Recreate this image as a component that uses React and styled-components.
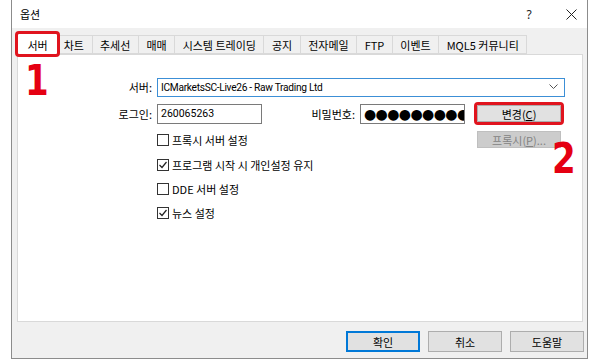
import React from 'react';
import styled, { createGlobalStyle } from 'styled-components';

const Global = createGlobalStyle`
  html, body { margin: 0; padding: 0; background: #ffffff; }
  body {
    font-family: "Noto Sans CJK KR", "Noto Sans", sans-serif;
    font-size: 11px;
    color: #000;
  }
  * { box-sizing: border-box; }
`;

const Window = styled.div`
  margin-left: 11px;
  width: 577px;
  height: 359px;
  border-left: 1px solid #8c8c8c;
  border-right: 1px solid #8c8c8c;
  border-bottom: 1px solid #8c8c8c;
  background: #f0f0f0;
  display: flex;
  flex-direction: column;
`;

const TitleBar = styled.div`
  height: 28px;
  background: #ffffff;
  display: flex;
  align-items: center;
  padding: 0 6px 0 8px;
`;

const Title = styled.div`
  flex: 1;
  font-size: 11px;
  color: #000;
`;

const TitleButton = styled.div`
  width: ${(p) => p.$w}px;
  margin-left: ${(p) => p.$gap || 0}px;
  display: flex;
  justify-content: center;
  align-items: center;
  font-family: "Noto Sans", sans-serif;
  font-size: 12px;
  color: #222;
`;

const Body = styled.div`
  flex: 1;
  display: flex;
  flex-direction: column;
  padding: 7px 4px 0 5px;
`;

const TabStrip = styled.div`
  display: flex;
  align-items: flex-end;
  height: 19px;
  position: relative;
  z-index: 2;
`;

const Tab = styled.div`
  height: ${(p) => (p.$active ? 22 : 19)}px;
  margin: ${(p) => (p.$active ? '0 -2px -1px 0' : '0 0 0 -1px')};
  padding: ${(p) => (p.$active ? '0 9.5px' : '0 7.5px')};
  display: flex;
  align-items: center;
  background: ${(p) => (p.$active ? '#ffffff' : '#f0f0f0')};
  border: 1px solid #d9d9d9;
  border-bottom: ${(p) => (p.$active ? 'none' : '1px solid #d9d9d9')};
  white-space: nowrap;
  outline: ${(p) => (p.$highlight ? '3px solid #e0141e' : 'none')};
  outline-offset: -1px;
  border-radius: ${(p) => (p.$highlight ? '2px' : '0')};
  position: relative;
  z-index: ${(p) => (p.$active ? 3 : 1)};
  &:first-child { margin-left: 0; }
`;

const Panel = styled.div`
  position: relative;
  height: 268px;
  background: #ffffff;
  border: 1px solid #d9d9d9;
`;

const Form = styled.div`
  display: grid;
  grid-template-columns: 134px 105px 88px 105px 98px;
  grid-template-rows: 26px 27px 25px 25px 24px 24px;
  column-gap: 5px;
  align-items: center;
  padding-top: 19px;
`;

const Label = styled.div`
  text-align: right;
  white-space: nowrap;
  grid-column: ${(p) => p.$col};
`;

const Combo = styled.div`
  grid-column: 2 / 6;
  margin-right: 3px;
  height: 19px;
  border: 1px solid #3c8fd6;
  display: flex;
  align-items: center;
  padding: 0 6px 0 3px;
  font-family: "Roboto", "Noto Sans CJK KR", sans-serif;
  font-size: 10.2px;
  letter-spacing: -0.3px;
`;

const ComboText = styled.span`
  flex: 1;
  white-space: nowrap;
`;

const TextBox = styled.div`
  grid-column: ${(p) => p.$col};
  height: 20px;
  border: 1px solid #7a7a7a;
  display: flex;
  align-items: center;
  padding: 0 3px;
  font-family: "Roboto", "Noto Sans CJK KR", sans-serif;
  font-size: 10.5px;
  overflow: hidden;
  white-space: nowrap;
`;

const Dots = styled.span`
  font-family: "DejaVu Sans", sans-serif;
  font-size: 14px;
  letter-spacing: -0.6px;
  line-height: 1;
`;

const PushButton = styled.div`
  grid-column: 5;
  margin-left: 7px;
  width: 84px;
  height: 17px;
  display: flex;
  align-items: center;
  justify-content: center;
  background: ${(p) => (p.$disabled ? '#cccccc' : '#e1e1e1')};
  border: 1px solid ${(p) => (p.$disabled ? '#bfbfbf' : '#adadad')};
  color: ${(p) => (p.$disabled ? '#838383' : '#000')};
  outline: ${(p) => (p.$highlight ? '3px solid #e0141e' : 'none')};
  border-radius: ${(p) => (p.$highlight ? '1px' : '0')};
  white-space: nowrap;
`;

const U = styled.span`
  text-decoration: underline;
`;

const CheckRow = styled.div`
  grid-column: 2 / 5;
  display: flex;
  align-items: center;
  gap: 3px;
  white-space: nowrap;
`;

const Box = styled.div`
  width: 12px;
  height: 12px;
  border: 1px solid #333333;
  background: #fff;
  display: flex;
  align-items: center;
  justify-content: center;
`;

const Footer = styled.div`
  flex: 1;
  display: flex;
  justify-content: flex-end;
  align-items: flex-start;
  gap: 8px;
  padding: 9px 0 0 0;
  margin-right: -1px;
`;

const DialogButton = styled.div`
  width: 74px;
  height: 21px;
  display: flex;
  align-items: center;
  justify-content: center;
  background: #e1e1e1;
  border: 1px solid ${(p) => (p.$default ? '#0078d7' : '#adadad')};
  box-shadow: ${(p) => (p.$default ? 'inset 0 0 0 1px #0078d7' : 'none')};
`;

const Marker = styled.div`
  position: absolute;
  left: ${(p) => p.$x}px;
  top: ${(p) => p.$y}px;
  font-family: "DejaVu Sans Condensed", "DejaVu Sans", sans-serif;
  font-weight: 700;
  font-size: 42px;
  line-height: 30px;
  height: 30px;
  color: #e50012;
  transform: scaleX(0.9);
  transform-origin: left top;
`;

function Check({ checked }) {
  return (
    <Box>
      {checked && (
        <svg width="10" height="10" viewBox="0 0 10 10">
          <polyline points="1.5,5 4,7.5 8.5,2" fill="none" stroke="#222" strokeWidth="1.2" />
        </svg>
      )}
    </Box>
  );
}

const tabs = ['서버', '차트', '추세선', '매매', '시스템 트레이딩', '공지', '전자메일', 'FTP', '이벤트', 'MQL5 커뮤니티'];

export default function App() {
  return (
    <>
      <Global />
      <Window>
        <TitleBar>
          <Title>옵션</Title>
          <TitleButton $w={22}>?</TitleButton>
          <TitleButton $w={20} $gap={21}>
            <svg width="11" height="11" viewBox="0 0 11 11">
              <path d="M0.5 0.5 L10.5 10.5 M10.5 0.5 L0.5 10.5" stroke="#222" strokeWidth="1" />
            </svg>
          </TitleButton>
        </TitleBar>
        <Body>
          <TabStrip>
            {tabs.map((t, i) => (
              <Tab key={t} $active={i === 0} $highlight={i === 0}>
                {t}
              </Tab>
            ))}
          </TabStrip>
          <Panel>
            <Marker $x={7} $y={11}>1</Marker>
            <Marker $x={534} $y={89}>2</Marker>
            <Form>
              <Label $col={1}>서버:</Label>
              <Combo>
                <ComboText>ICMarketsSC-Live26 - Raw Trading Ltd</ComboText>
                <svg width="9" height="6" viewBox="0 0 9 6">
                  <polyline points="0.5,0.5 4.5,4.5 8.5,0.5" fill="none" stroke="#555" strokeWidth="1" />
                </svg>
              </Combo>

              <Label $col={1}>로그인:</Label>
              <TextBox $col={2}>260065263</TextBox>
              <Label $col={3}>비밀번호:</Label>
              <TextBox $col={4}>
                <Dots>●●●●●●●●●●●●</Dots>
              </TextBox>
              <PushButton $highlight>
                변경(<U>C</U>)
              </PushButton>

              <CheckRow>
                <Check />
                프록시 서버 설정
              </CheckRow>
              <PushButton $disabled>
                프록시(<U>P</U>)...
              </PushButton>

              <CheckRow>
                <Check checked />
                프로그램 시작 시 개인설정 유지
              </CheckRow>
              <CheckRow>
                <Check />
                DDE 서버 설정
              </CheckRow>
              <CheckRow>
                <Check checked />
                뉴스 설정
              </CheckRow>
            </Form>
          </Panel>
          <Footer>
            <DialogButton $default>확인</DialogButton>
            <DialogButton>취소</DialogButton>
            <DialogButton>도움말</DialogButton>
          </Footer>
        </Body>
      </Window>
    </>
  );
}
